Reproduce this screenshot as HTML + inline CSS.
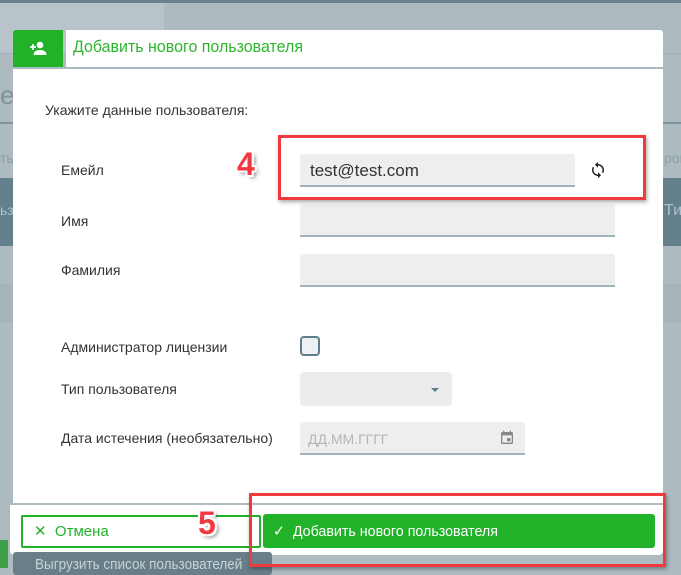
<!DOCTYPE html>
<html><head><meta charset="utf-8"><style>
*{margin:0;padding:0;box-sizing:border-box}
body{width:681px;height:575px;overflow:hidden;background:#adbbc1;position:relative;font-family:"Liberation Sans",sans-serif;color:#333}
.a{position:absolute}
.t{font-size:14px;color:#333;white-space:nowrap}
.inp{position:absolute;background:#eeeeee;border-bottom:2px solid #a0b4bd;border-radius:3px 3px 0 0}
.red{position:absolute;border:3px solid #f2393f;box-shadow:1px 2px 4px rgba(0,0,0,.35)}
.num{position:absolute;font-family:"Liberation Sans",sans-serif;font-weight:bold;font-size:32px;color:#f2393f;text-shadow:-2px 0 #fff,2px 0 #fff,0 -2px #fff,0 2px #fff,2px 2px #fff,-2px -2px #fff,2px -2px #fff,-2px 2px #fff,3px 3px 4px rgba(0,0,0,.5)}
</style></head><body>
<div class="a" style="left:0;top:0;width:681px;height:3px;background:#6a828e"></div>
<div class="a" style="left:0;top:3px;width:164px;height:50px;background:#b8c4ca"></div>
<div class="a" style="left:0;top:53px;width:681px;height:1px;background:#9fb0b7"></div>
<div class="a" style="left:0;top:122px;width:681px;height:2px;background:#7d939d"></div>
<div class="a" style="left:0;top:178px;width:681px;height:68px;background:#647f8c"></div>
<div class="a" style="left:0;top:284px;width:681px;height:38px;background:#a6b4ba"></div>
<div class="a t" style="left:0;top:80px;font-size:26px;color:#7f949d">ел</div>
<div class="a t" style="left:0;top:150px;color:#8a9ca4">ть</div>
<div class="a t" style="left:664px;top:150px;color:#8a9ca4">ров</div>
<div class="a t" style="left:664px;top:202px;color:#a9c4d0;font-size:16px">Ти</div>
<div class="a t" style="left:0;top:202px;color:#a9c4d0">ьз</div>
<div class="a" style="left:0;top:540px;width:8px;height:28px;background:#3e9e46"></div>

<div class="a" style="left:13px;top:30px;width:50px;height:37px;background:#22b22a;border-radius:3px 0 0 0"></div>
<svg class="a" style="left:29px;top:40px" width="18" height="16" viewBox="0 0 18 16"><circle cx="11" cy="5" r="3.3" fill="#fff"/><path d="M4.5 15c0-3.5 3-5 6.5-5s6.5 1.5 6.5 5z" fill="#fff"/><path d="M1 7h6M4 4v6" stroke="#fff" stroke-width="1.8"/></svg>
<div class="a" style="left:66px;top:30px;width:597px;height:37px;background:#fff;border-radius:0 3px 0 0"></div>
<div class="a" style="left:73px;top:37px;font-size:17px;color:#2db52d;white-space:nowrap;transform:scaleX(.94);transform-origin:0 0">Добавить нового пользователя</div>

<div class="a" style="left:13px;top:69px;width:650px;height:434px;background:#fff"></div>
<div class="a t" style="left:45px;top:102px">Укажите данные пользователя:</div>
<div class="a t" style="left:61px;top:162px">Емейл</div>
<div class="inp" style="left:300px;top:154px;width:275px;height:33px"></div>
<div class="a" style="left:310px;top:161px;font-size:17px;color:#333">test@test.com</div>
<svg class="a" style="left:589px;top:161px" width="18" height="18" viewBox="0 0 24 24"><path d="M12 4V1L8 5l4 4V6c3.3 0 6 2.7 6 6 0 1-.3 2-.7 2.8l1.5 1.5C19.5 15 20 13.6 20 12c0-4.4-3.6-8-8-8zm0 14c-3.3 0-6-2.7-6-6 0-1 .3-2 .7-2.8L5.2 7.7C4.5 9 4 10.4 4 12c0 4.4 3.6 8 8 8v3l4-4-4-4v3z" fill="#222"/></svg>
<div class="a t" style="left:61px;top:213px">Имя</div>
<div class="inp" style="left:300px;top:204px;width:315px;height:33px"></div>
<div class="a t" style="left:61px;top:262px">Фамилия</div>
<div class="inp" style="left:300px;top:254px;width:315px;height:33px"></div>
<div class="a t" style="left:61px;top:339px">Администратор лицензии</div>
<div class="a" style="left:300px;top:336px;width:20px;height:20px;border:2px solid #5f7d8c;border-radius:4px;background:#eef1f3"></div>
<div class="a t" style="left:61px;top:381px">Тип пользователя</div>
<div class="a" style="left:300px;top:372px;width:152px;height:34px;background:#ececec;border-radius:4px"></div>
<div class="a" style="left:431px;top:388px;border-left:4px solid transparent;border-right:4px solid transparent;border-top:4px solid #5f7d8c"></div>
<div class="a t" style="left:61px;top:430px">Дата истечения (необязательно)</div>
<div class="inp" style="left:300px;top:422px;width:225px;height:33px"></div>
<div class="a t" style="left:308px;top:431px;color:#b5b5b5">ДД.ММ.ГГГГ</div>
<svg class="a" style="left:499px;top:430px" width="16" height="16" viewBox="0 0 24 24"><path d="M17 12h-5v5h5v-5zM16 1v2H8V1H6v2H5c-1.1 0-2 .9-2 2v14c0 1.1.9 2 2 2h14c1.1 0 2-.9 2-2V5c0-1.1-.9-2-2-2h-1V1h-2zm3 18H5V8h14v11z" fill="#888"/></svg>

<div class="a" style="left:10px;top:505px;width:653px;height:50px;background:#fff;border-radius:0 0 4px 4px"></div>
<div class="a" style="left:13px;top:552px;width:259px;height:23px;background:#687f8a;border-radius:3px"></div>
<div class="a t" style="left:35px;top:556px;color:#c8d2d7;font-size:15px;transform:scaleX(.9);transform-origin:0 0">Выгрузить список пользователей</div>
<div class="a" style="left:21px;top:515px;width:240px;height:33px;border:2px solid #22b22a;border-radius:2px;background:#fff"></div>
<div class="a" style="left:34px;top:522px;font-size:15px;color:#22b22a">✕ &nbsp;Отмена</div>
<div class="a" style="left:263px;top:514px;width:392px;height:34px;background:#22b22a;border-radius:3px"></div>
<div class="a" style="left:273px;top:522px;font-size:15px;color:#fff;white-space:nowrap;transform:scaleX(.95);transform-origin:0 0">✓ &nbsp;Добавить нового пользователя</div>

<div class="red" style="left:278px;top:135px;width:368px;height:65px"></div>
<div class="red" style="left:249px;top:493px;width:417px;height:74px"></div>
<div class="num" style="left:237px;top:146px">4</div>
<div class="num" style="left:198px;top:505px">5</div>
</body></html>
